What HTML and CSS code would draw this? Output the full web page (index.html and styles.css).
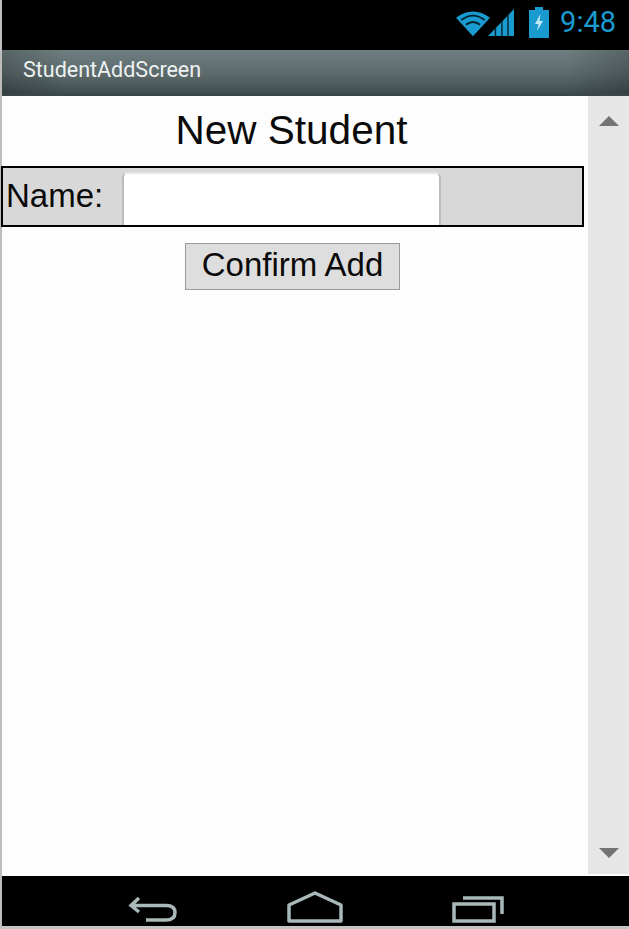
FILE: index.html
```html
<!DOCTYPE html>
<html lang="en">
<head>
  <meta charset="UTF-8">
  <link rel="stylesheet" href="styles.css">
</head>
<body>
<div class="phone">
  <!-- status bar -->
  <div class="status-bar">
    <svg class="icon-wifi" width="34" height="30" viewBox="0 0 36 30">
      <path d="M0 10.500 Q18 -3 36 10.500 L18 30 Z" fill="#1a9bd0"/>
      <path d="M5.500 13 Q18 3.500 30.500 13 M10.500 18 Q18 12 25.500 18" fill="none" stroke="#04222e" stroke-width="2"/>
    </svg>
    <svg class="icon-signal" width="26" height="29" viewBox="0 0 28 29">
      <path d="M0 29 L28 0 V29 Z" fill="#1a9bd0"/>
      <path d="M8 29 V20 M15 29 V13 M21.500 29 V6" stroke="#04222e" stroke-width="1.500"/>
    </svg>
    <svg class="icon-battery" width="20" height="31" viewBox="0 0 20 31">
      <path d="M6 0 H14 V3 H20 V31 H0 V3 H6 Z" fill="#1a9bd0"/>
      <path d="M11.500 7 L6 17 H9.500 L8 24 L14 14 H10.500 Z" fill="#c4e8f5"/>
    </svg>
    <span class="clock">9:48</span>
  </div>

  <!-- title bar -->
  <div class="title-bar">StudentAddScreen</div>

  <!-- content + scrollbar -->
  <div class="screen">
    <div class="content">
      <h1 class="heading">New Student</h1>
      <div class="name-row">
        <label class="name-label">Name:</label>
        <input class="name-input" type="text">
      </div>
      <div class="button-row">
        <button class="confirm-btn">Confirm Add</button>
      </div>
    </div>
    <div class="scrollbar">
      <span class="arrow-up"></span>
      <span class="arrow-down"></span>
    </div>
  </div>

  <!-- nav bar -->
  <div class="nav-bar">
    <svg width="50" height="28" viewBox="0 0 50 28" fill="none" stroke="#a9b8b8" stroke-width="3.500">
      <path d="M11 3 L3 10.500 L11 17 M3 10.500 H38 Q47 10.500 47 17.500 Q47 25 38 25 H18"/>
    </svg>
    <svg width="56" height="32" viewBox="0 0 56 32" fill="none" stroke="#a9b8b8" stroke-width="3.500">
      <path d="M28 2 L54 14 V30 H2 V14 Z" stroke-linejoin="round"/>
    </svg>
    <svg width="52" height="28" viewBox="0 0 52 28" fill="none" stroke="#a9b8b8" stroke-width="3.500">
      <path d="M2 9 H42 V26 H2 Z"/>
      <path d="M11 3 H50 V19"/>
    </svg>
  </div>
  <div class="bottom-edge"></div>
</div>
</body>
</html>
```
FILE: styles.css
```css
/* reset */
* { margin: 0; padding: 0; box-sizing: border-box; }
html, body { height: 100%; }
body {
  font-family: "Liberation Sans", Arial, sans-serif;
  background: #fff;
  color: #0a0a0a;
  overflow: hidden;
}

.phone {
  display: flex;
  flex-direction: column;
  height: 929px;
  width: 629px;
  border-left: 2px solid #bdbdbd;
}

/* status bar */
.status-bar {
  height: 50px;
  background: #000;
  display: flex;
  align-items: center;
  padding: 0 13px 0 0;
  justify-content: flex-end;
}
.icon-wifi { margin-top: -6px; }
.icon-signal { margin: -6px 0 0 -2px; }
.icon-battery { margin: -6px 0 0 15px; }
.clock {
  margin: -6px 0 0 11px;
  font-family: Roboto, sans-serif;
  font-size: 29px;
  color: #1a9bd0;
}

/* title bar */
.title-bar {
  height: 46px;
  padding: 0 0 5px 21px;
  display: flex;
  align-items: center;
  font-family: Roboto, sans-serif;
  font-size: 21.500px;
  color: #eef2f2;
  background:
    linear-gradient(90deg, rgba(0,0,0,0.2), rgba(0,0,0,0) 10%, rgba(0,0,0,0) 90%, rgba(0,0,0,0.2)),
    linear-gradient(#6f7e80, #5c6a6c 55%, #3f4c4e);
  border-bottom: 2px solid #39464a;
}

/* main area */
.screen {
  flex: 1;
  display: flex;
  background: #fdfdfd;
}
.content {
  width: 586px;
  padding-right: 4px;
}
.heading {
  font-size: 40.500px;
  font-weight: normal;
  text-align: center;
  height: 70px;
  line-height: 68px;
  padding-right: 3px;
}
.name-row {
  display: flex;
  align-items: flex-end;
  height: 61px;
  margin-left: -1px;
  background: #d8d8d8;
  border: 2px solid #000;
}
.name-label {
  font-size: 33px;
  width: 119px;
  padding: 0 0 2px 3px;
  align-self: center;
}
.name-input {
  width: 319px;
  height: 53px;
  background: #fff;
  border: none;
  border-left: 2px solid #bcbcbc;
  border-right: 2px solid #bcbcbc;
  border-top: 2px solid #e6e6e6;
  border-radius: 6px 6px 0 0;
}
.button-row {
  display: flex;
  justify-content: center;
  padding: 16px 1px 0 0;
}
.confirm-btn {
  width: 215px;
  height: 47px;
  padding-bottom: 4px;
  font-family: inherit;
  font-size: 33px;
  color: #0a0a0a;
  background: #dedede;
  border: 1px solid #9a9a9a;
}

/* scrollbar */
.scrollbar {
  flex: 1;
  margin-bottom: 2px;
  background: #e6e6e6;
  display: flex;
  flex-direction: column;
  align-items: center;
  justify-content: space-between;
  padding: 20px 0 16px;
}
.arrow-up {
  width: 0; height: 0;
  border-left: 10px solid transparent;
  border-right: 10px solid transparent;
  border-bottom: 10px solid #737373;
}
.arrow-down {
  width: 0; height: 0;
  border-left: 10px solid transparent;
  border-right: 10px solid transparent;
  border-top: 10px solid #737373;
}

/* nav bar */
.nav-bar {
  height: 50px;
  background: #000;
  display: flex;
  align-items: flex-end;
  gap: 109px;
  padding: 0 0 3px 126px;
}
.bottom-edge {
  height: 3px;
  background: #c4c4c4;
}
```
